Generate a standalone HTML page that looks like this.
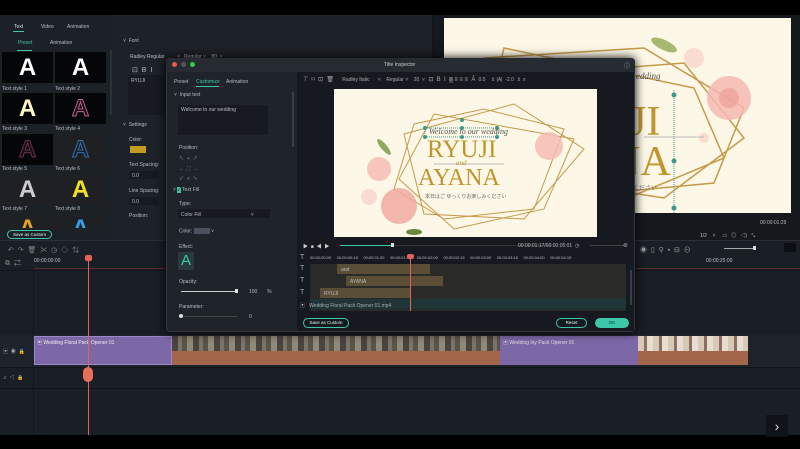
<!DOCTYPE html>
<html><head><meta charset="utf-8"><style>
*{margin:0;padding:0;box-sizing:border-box}
body{width:800px;height:449px;overflow:hidden;background:#1b1f26;font-family:"Liberation Sans","Noto Sans CJK JP",sans-serif;color:#c8ccd2;position:relative;font-size:5px}
.a{position:absolute}
.t{position:absolute;white-space:nowrap;font-size:5px;color:#b8bcc4}
.thumb{position:absolute;width:51px;height:31px;background:#050608;color:#fff;font:bold 24px "Liberation Sans",sans-serif;text-align:center;line-height:31px}
.ser{font-family:"Liberation Serif",serif}
.btn{position:absolute;border:1px solid #3ec6a8;border-radius:6px;color:#dfe;font-size:4.5px;text-align:center}
</style></head><body>
<div class="a" style="left:0;top:0;width:800px;height:15px;background:#000"></div>
<div class="a" style="left:0;top:435px;width:800px;height:14px;background:#000"></div>
<div class="a" style="left:0;top:15px;width:115px;height:225px;background:#1c2027"></div>
<div class="t" style="left:14px;top:24px;color:#d8dce0">Text</div>
<div class="a" style="left:13px;top:31px;width:11px;height:1px;background:#3ec6a8"></div>
<div class="t" style="left:41px;top:24px">Video</div>
<div class="t" style="left:67px;top:24px">Animation</div>
<div class="t" style="left:18px;top:40px;color:#3ec6a8">Preset</div>
<div class="a" style="left:17px;top:50px;width:15px;height:1px;background:#3ec6a8"></div>
<div class="t" style="left:50px;top:40px">Animation</div>
<div class="a" style="left:110px;top:50px;width:2px;height:65px;background:#2c3038"></div>
<div class="thumb" style="left:2px;top:52px">A</div><div class="thumb" style="left:55px;top:52px">A</div>
<div class="t" style="left:2px;top:86px">Text style 1</div><div class="t" style="left:55px;top:86px">Text style 2</div>
<div class="thumb" style="left:2px;top:93px;color:#fff6c8">A</div><div class="thumb" style="left:55px;top:93px;color:#111;-webkit-text-stroke:1px #c0609a">A</div>
<div class="t" style="left:2px;top:126px">Text style 3</div><div class="t" style="left:55px;top:126px">Text style 4</div>
<div class="thumb" style="left:2px;top:134px;color:#1a0d14;-webkit-text-stroke:1px #6a3048">A</div><div class="thumb" style="left:55px;top:134px;background:#1e2024;color:#1e2024;-webkit-text-stroke:1px #3070b0">A</div>
<div class="t" style="left:2px;top:166px">Text style 5</div><div class="t" style="left:55px;top:166px">Text style 6</div>
<div class="thumb" style="left:2px;top:174px;background:#1e2024;color:#ccc">A</div><div class="thumb" style="left:55px;top:174px;background:#1e2024;color:#f0e020">A</div>
<div class="t" style="left:2px;top:206px">Text style 7</div><div class="t" style="left:55px;top:206px">Text style 8</div>
<div class="thumb" style="left:2px;top:214px;height:14px;background:#1e2024;color:#e8a020;line-height:30px">A</div><div class="thumb" style="left:55px;top:214px;height:14px;background:#1e2024;color:#30a0e8;line-height:30px">A</div>
<div class="a" style="left:0;top:228px;width:115px;height:12px;background:#1c2027"></div>
<div class="btn" style="left:7px;top:230px;width:45px;height:9px;line-height:7px">Save as Custom</div>
<div class="a" style="left:115px;top:15px;width:320px;height:225px;background:#1d2128"></div>
<div class="t" style="left:123px;top:38px">˅ &nbsp;Font</div>
<div class="t" style="left:130px;top:54px">Radley Regular &nbsp;&nbsp;&nbsp;&nbsp;&nbsp;&nbsp;&nbsp;&nbsp;˅ &nbsp;&nbsp;Regular ˅ &nbsp;&nbsp;&nbsp;80 &nbsp;˅</div>
<div class="t" style="left:132px;top:66px;font-size:7px">⊡ &nbsp;B &nbsp;I</div>
<div class="a" style="left:128px;top:75px;width:40px;height:40px;background:#171a20"></div>
<div class="t" style="left:131px;top:78px">RYUJI</div>
<div class="t" style="left:123px;top:122px">˅ &nbsp;Settings</div>
<div class="t" style="left:129px;top:137px">Color:</div>
<div class="a" style="left:130px;top:146px;width:16px;height:7px;background:#c59a20"></div>
<div class="t" style="left:129px;top:162px">Text Spacing:</div>
<div class="a" style="left:129px;top:171px;width:30px;height:8px;background:#171a20"></div><div class="t" style="left:132px;top:173px">0.0</div>
<div class="t" style="left:129px;top:188px">Line Spacing:</div>
<div class="a" style="left:129px;top:197px;width:30px;height:8px;background:#171a20"></div><div class="t" style="left:132px;top:199px">0.0</div>
<div class="t" style="left:129px;top:213px">Position:</div>
<div class="a" style="left:432px;top:15px;width:3px;height:225px;background:#121519"></div>
<div class="a" style="left:435px;top:15px;width:365px;height:225px;background:#15181d"></div>
<div class="a" style="left:444px;top:18px;width:347px;height:195px;background:#fcf7e6;overflow:hidden">
<svg width="347" height="195" style="position:absolute;left:0;top:0">
<g fill="none" stroke="#c69a4a" stroke-width="1.5">
<polygon points="40,40 200,30 300,90 270,165 110,180 20,120"/>
<polygon points="60,30 250,70 280,140 160,190 30,150"/>
<polygon points="110,55 240,45 300,120 220,180 90,160"/>
</g>
<circle cx="285" cy="80" r="22" fill="#f4b8b0" opacity=".85"/><circle cx="285" cy="80" r="10" fill="#ec9a92" opacity=".6"/>
<circle cx="250" cy="40" r="10" fill="#f6c8c0" opacity=".6"/>
<circle cx="260" cy="120" r="5" fill="#f6c8c0" opacity=".6"/>
<ellipse cx="220" cy="27" rx="14" ry="5" fill="#a8b870" transform="rotate(25 220 27)"/>
<line x1="230" y1="72" x2="230" y2="205" stroke="#3a9a88" stroke-dasharray="1,1"/>
<circle cx="230" cy="77" r="2.5" fill="#3a9a88"/><circle cx="230" cy="143" r="2.5" fill="#3a9a88"/><circle cx="230" cy="190" r="2.5" fill="#3a9a88"/>
<line x1="200" y1="119" x2="260" y2="119" stroke="#bbb" stroke-width="1"/>
</svg>
<div class="a ser" style="left:186px;top:80px;font-size:42px;color:#c0952e">JI</div>
<div class="a ser" style="left:166px;top:120px;font-size:42px;color:#c0952e">NA</div>
<div class="a ser" style="left:192px;top:53px;font-size:9px;font-style:italic;color:#555">edding</div>
<div class="a" style="left:183px;top:165px;font-size:6px;color:#777">みください</div>
</div>
<div class="t" style="left:760px;top:220px">00:00:01:29</div>
<div class="t" style="left:700px;top:232px">1/2 &nbsp;&nbsp;&nbsp;˅ &nbsp;&nbsp;&nbsp;&nbsp;▭ &nbsp;&nbsp;◎ &nbsp;&nbsp;◁) &nbsp;&nbsp;⤡</div>
<div class="a" style="left:0;top:240px;width:800px;height:195px;background:#1a1e25"></div>
<div class="a" style="left:0;top:240px;width:800px;height:1px;background:#2a2e36"></div>
<div class="t" style="left:8px;top:245px;font-size:7px;color:#888">↶ &nbsp;↷ &nbsp;🗑 &nbsp;✂ &nbsp;◷ &nbsp;◇ &nbsp;⇅</div>
<div class="t" style="left:640px;top:245px;font-size:7px;color:#999">◉ &nbsp;▯ &nbsp;⚲ &nbsp;▪ &nbsp;⊟ &nbsp;⊖</div>
<div class="a" style="left:724px;top:248px;width:32px;height:1px;background:#aaa"></div>
<div class="a" style="left:753px;top:246px;width:3px;height:4px;background:#ddd"></div>
<div class="a" style="left:784px;top:243px;width:12px;height:9px;background:#0c0e11"></div>
<div class="t" style="left:5px;top:258px;font-size:7px;color:#888">⧉ &nbsp;⇄</div>
<div class="t" style="left:34px;top:258px">00:00:00:00</div>
<div class="t" style="left:706px;top:258px">00:00:25:00</div>
<div class="a" style="left:34px;top:268px;width:766px;height:1px;background:#5a2a30"></div>
<div class="a" style="left:0;top:270px;width:800px;height:1px;background:#12151a"></div>
<div class="a" style="left:33px;top:270px;width:1px;height:165px;background:#12151a"></div>
<div class="a" style="left:0;top:335px;width:800px;height:32px;background:#1e222a"></div>
<div class="t" style="left:3px;top:348px;color:#aaa">▣ &nbsp;◉ &nbsp;🔒</div>
<div class="a" style="left:34px;top:336px;width:138px;height:29px;background:#7c68a6;border:1px solid #9a88c8"></div>
<div class="t" style="left:37px;top:339px;color:#eee">▣ Wedding Floral Pack Opener 01</div>
<div class="a" style="left:172px;top:336px;width:328px;height:15px;background:repeating-linear-gradient(90deg,#4a443c 0 6px,#7a7468 6px 10px,#5a5448 10px 15px,#908878 15px 21px)"></div>
<div class="a" style="left:172px;top:351px;width:328px;height:14px;background:#a4664a"></div>
<div class="a" style="left:500px;top:336px;width:138px;height:29px;background:#7c68a6"></div>
<div class="t" style="left:503px;top:339px;color:#ddd">▣ Wedding Ivy Pack Opener 01</div>
<div class="a" style="left:638px;top:336px;width:110px;height:15px;background:repeating-linear-gradient(90deg,#d8c8b8 0 6px,#8a7060 6px 9px,#e8ddd0 9px 15px)"></div>
<div class="a" style="left:638px;top:351px;width:110px;height:14px;background:#a4664a"></div>
<div class="a" style="left:0;top:367px;width:800px;height:1px;background:#12151a"></div>
<div class="t" style="left:3px;top:374px;color:#aaa">♫ &nbsp;◁ &nbsp;🔒</div>
<div class="a" style="left:0;top:388px;width:800px;height:1px;background:#12151a"></div>
<div class="a" style="left:88px;top:256px;width:1px;height:179px;background:#e4605a"></div>
<div class="a" style="left:85px;top:255px;width:7px;height:6px;background:#e4605a;border-radius:2px"></div>
<div class="a" style="left:83px;top:367px;width:10px;height:15px;background:#e8705a;border-radius:5px"></div>
<div class="a" style="left:766px;top:415px;width:22px;height:22px;background:#101318;color:#ddd;font-size:14px;text-align:center;line-height:22px">›</div>
<div class="a" style="left:166px;top:58px;width:469px;height:274px;background:#1f232a;border:1px solid #333842;border-radius:4px;box-shadow:0 0 10px #000"></div>
<div class="a" style="left:166px;top:58px;width:469px;height:14px;background:#262a31;border-radius:4px 4px 0 0"></div>
<div class="a" style="left:172px;top:62px;width:5px;height:5px;border-radius:50%;background:#e55"></div>
<div class="a" style="left:181px;top:62px;width:5px;height:5px;border-radius:50%;background:#555"></div>
<div class="a" style="left:190px;top:62px;width:5px;height:5px;border-radius:50%;background:#3c4"></div>
<div class="t" style="left:384px;top:62px;color:#ccc">Title Inspector</div>
<div class="t" style="left:624px;top:61px;font-size:6px">ⓘ</div>
<div class="t" style="left:174px;top:79px">Preset</div>
<div class="t" style="left:196px;top:79px;color:#3ec6a8">Customize</div>
<div class="a" style="left:196px;top:86px;width:23px;height:1px;background:#3ec6a8"></div>
<div class="t" style="left:226px;top:79px">Animation</div>
<div class="t" style="left:174px;top:92px">˅ &nbsp;Input text</div>
<div class="a" style="left:178px;top:105px;width:90px;height:30px;background:#171a20"></div>
<div class="t" style="left:181px;top:107px">Welcome to our wedding</div>
<div class="t" style="left:179px;top:145px">Position:</div>
<div class="t" style="left:179px;top:154px;line-height:10px;color:#888">↖ &nbsp;+ &nbsp;↗<br>← &nbsp;⛶ &nbsp;→<br>↙ &nbsp;+ &nbsp;↘</div>
<div class="t" style="left:173px;top:186px">˅ <span style="background:#3ec6a8;color:#000">✓</span> Text Fill</div>
<div class="t" style="left:179px;top:201px">Type:</div>
<div class="a" style="left:178px;top:209px;width:92px;height:9px;background:#171a20"></div><div class="t" style="left:181px;top:212px">Color Fill &nbsp;&nbsp;&nbsp;&nbsp;&nbsp;&nbsp;&nbsp;&nbsp;&nbsp;&nbsp;&nbsp;&nbsp;&nbsp;&nbsp;&nbsp;&nbsp;&nbsp;&nbsp;&nbsp;&nbsp;&nbsp;&nbsp;&nbsp;&nbsp;&nbsp;&nbsp;&nbsp;&nbsp;&nbsp;&nbsp;&nbsp;&nbsp;&nbsp;&nbsp;&nbsp;˅</div>
<div class="t" style="left:179px;top:228px">Color: <span style="display:inline-block;width:16px;height:6px;background:#4a5060;vertical-align:middle"></span> ˅</div>
<div class="t" style="left:179px;top:244px">Effect:</div>
<div class="a" style="left:178px;top:252px;width:16px;height:18px;background:#2a3a3c;color:#3ec6a8;font-size:15px;text-align:center;line-height:18px">A</div>
<div class="t" style="left:179px;top:279px">Opacity:</div>
<div class="a" style="left:181px;top:291px;width:56px;height:1px;background:#ccc"></div>
<div class="a" style="left:235px;top:289px;width:3px;height:4px;background:#ddd"></div>
<div class="t" style="left:249px;top:289px">100 &nbsp;&nbsp;&nbsp;&nbsp;&nbsp;&nbsp;%</div>
<div class="t" style="left:179px;top:304px">Parameter:</div>
<div class="a" style="left:181px;top:316px;width:56px;height:1px;background:#444"></div>
<div class="a" style="left:179px;top:314px;width:4px;height:4px;border-radius:50%;background:#ddd"></div>
<div class="t" style="left:249px;top:314px">0</div>
<div class="a" style="left:292px;top:92px;width:2px;height:55px;background:#3a3e46"></div>
<div class="a" style="left:297px;top:72px;width:337px;height:259px;background:#161a20"></div>
<div class="t" style="left:303px;top:76px;font-size:6px;color:#aaa">⊤ &nbsp;⌑ &nbsp;⊡ &nbsp;🗑 &nbsp;&nbsp;&nbsp;&nbsp;<span style="font-size:5px">Radley Italic &nbsp;&nbsp;&nbsp;&nbsp;&nbsp;˅ &nbsp;&nbsp;&nbsp;Regular ˅ &nbsp;&nbsp;&nbsp;20 &nbsp;˅</span> &nbsp;⊡ &nbsp;B &nbsp;I &nbsp;<span style="background:#444">≡</span> ≡ ≡ ≡ &nbsp;Ā <span style="font-size:5px">&nbsp;0.0 &nbsp;&nbsp;&nbsp;⇕ |A| &nbsp;-2.0 &nbsp;⇕</span> ⌕</div>
<div class="a" style="left:334px;top:89px;width:263px;height:148px;background:#fcf7e6;overflow:hidden">
<svg width="263" height="148" style="position:absolute;left:0;top:0">
<g fill="none" stroke="#c69a4a" stroke-width="1">
<polygon points="80,35 150,20 230,40 200,120 110,130 60,100"/>
<polygon points="100,25 240,50 210,120 120,140 65,90"/>
<polygon points="70,45 180,15 250,60 190,130 90,125"/>
</g>
<circle cx="215" cy="57" r="14" fill="#f4bcb4" opacity=".85"/>
<circle cx="45" cy="80" r="12" fill="#f4bcb4" opacity=".85"/>
<circle cx="65" cy="117" r="18" fill="#f1aaa2" opacity=".85"/>
<circle cx="35" cy="108" r="8" fill="#f6d0ca" opacity=".7"/>
<ellipse cx="50" cy="58" rx="3" ry="10" fill="#90a860" transform="rotate(-40 50 58)"/>
<ellipse cx="80" cy="143" rx="8" ry="3" fill="#6a8840"/>
<line x1="100" y1="75" x2="170" y2="75" stroke="#bbb"/>
<rect x="91" y="39" width="72" height="9" fill="none" stroke="#3a9a88" stroke-dasharray="1,1"/>
<g fill="#3a9a88"><circle cx="128" cy="31" r="2"/><circle cx="128" cy="39" r="2"/><circle cx="128" cy="48" r="2"/><circle cx="91" cy="39" r="2"/><circle cx="91" cy="48" r="2"/><circle cx="163" cy="39" r="2"/><circle cx="163" cy="48" r="2"/></g>
</svg>
<div class="a ser" style="left:95px;top:38px;font-size:8px;font-style:italic;color:#555">Welcome to our wedding</div>
<div class="a ser" style="left:93px;top:47px;font-size:25px;color:#c0952e">RYUJI</div>
<div class="a ser" style="left:122px;top:70px;font-size:7px;font-style:italic;color:#c0952e">and</div>
<div class="a ser" style="left:84px;top:76px;font-size:24px;color:#c0952e">AYANA</div>
<div class="a" style="left:91px;top:104px;font-size:5px;color:#666">本日はご ゆっくりお楽しみください</div>
</div>
<div class="t" style="left:303px;top:243px;color:#ccc">▶ &nbsp;■ &nbsp;◀ &nbsp;▶</div>
<div class="a" style="left:340px;top:245px;width:52px;height:1px;background:#3ec6a8"></div>
<div class="a" style="left:392px;top:245px;width:160px;height:1px;background:#333"></div>
<div class="a" style="left:391px;top:243px;width:3px;height:4px;background:#ddd"></div>
<div class="t" style="left:518px;top:243px">00:00:01:17/00:00:05:01 &nbsp;◷</div>
<div class="a" style="left:590px;top:245px;width:35px;height:1px;background:#444"></div>
<div class="t" style="left:623px;top:242px">⊗</div>
<div class="t" style="left:300px;top:254px;font-size:7px;color:#aaa">T</div>
<div class="t" style="left:310px;top:255px;font-size:4px">00:00:00:00 &nbsp;&nbsp;&nbsp;&nbsp;00:00:00:15 &nbsp;&nbsp;&nbsp;&nbsp;00:00:01:00 &nbsp;&nbsp;&nbsp;&nbsp;00:00:01:15 &nbsp;&nbsp;&nbsp;&nbsp;00:00:02:00 &nbsp;&nbsp;&nbsp;&nbsp;00:00:02:15 &nbsp;&nbsp;&nbsp;&nbsp;00:00:03:00 &nbsp;&nbsp;&nbsp;&nbsp;00:00:03:15 &nbsp;&nbsp;&nbsp;&nbsp;00:00:04:00 &nbsp;&nbsp;&nbsp;&nbsp;00:00:04:15</div>
<div class="a" style="left:310px;top:264px;width:316px;height:47px;background:#2a2a28"></div>
<div class="t" style="left:300px;top:265px;font-size:7px;color:#aaa">T</div>
<div class="a" style="left:337px;top:264px;width:93px;height:10px;background:#5a4e36"></div><div class="t" style="left:341px;top:267px">and</div>
<div class="t" style="left:300px;top:277px;font-size:7px;color:#aaa">T</div>
<div class="a" style="left:346px;top:276px;width:97px;height:10px;background:#5a4e36"></div><div class="t" style="left:350px;top:279px">AYANA</div>
<div class="t" style="left:300px;top:289px;font-size:7px;color:#aaa">T</div>
<div class="a" style="left:320px;top:288px;width:90px;height:10px;background:#5a4e36"></div><div class="t" style="left:324px;top:291px">RYUJI</div>
<div class="a" style="left:310px;top:299px;width:316px;height:10px;background:#1f3538"></div>
<div class="t" style="left:300px;top:302px;color:#aaa">▣ &nbsp;&nbsp;Wedding Floral Pack Opener 01.mp4</div>
<div class="a" style="left:410px;top:256px;width:1px;height:55px;background:#e4605a"></div>
<div class="a" style="left:407px;top:254px;width:7px;height:5px;background:#e4605a;border-radius:2px"></div>
<div class="a" style="left:630px;top:270px;width:2px;height:35px;background:#3a3e46"></div>
<div class="btn" style="left:303px;top:318px;width:46px;height:10px;line-height:8px">Save as Custom</div>
<div class="btn" style="left:556px;top:318px;width:31px;height:10px;line-height:8px">Reset</div>
<div class="btn" style="left:595px;top:318px;width:34px;height:10px;line-height:8px;background:#3ec6a8;color:#0b3a30">OK</div>
</body></html>
